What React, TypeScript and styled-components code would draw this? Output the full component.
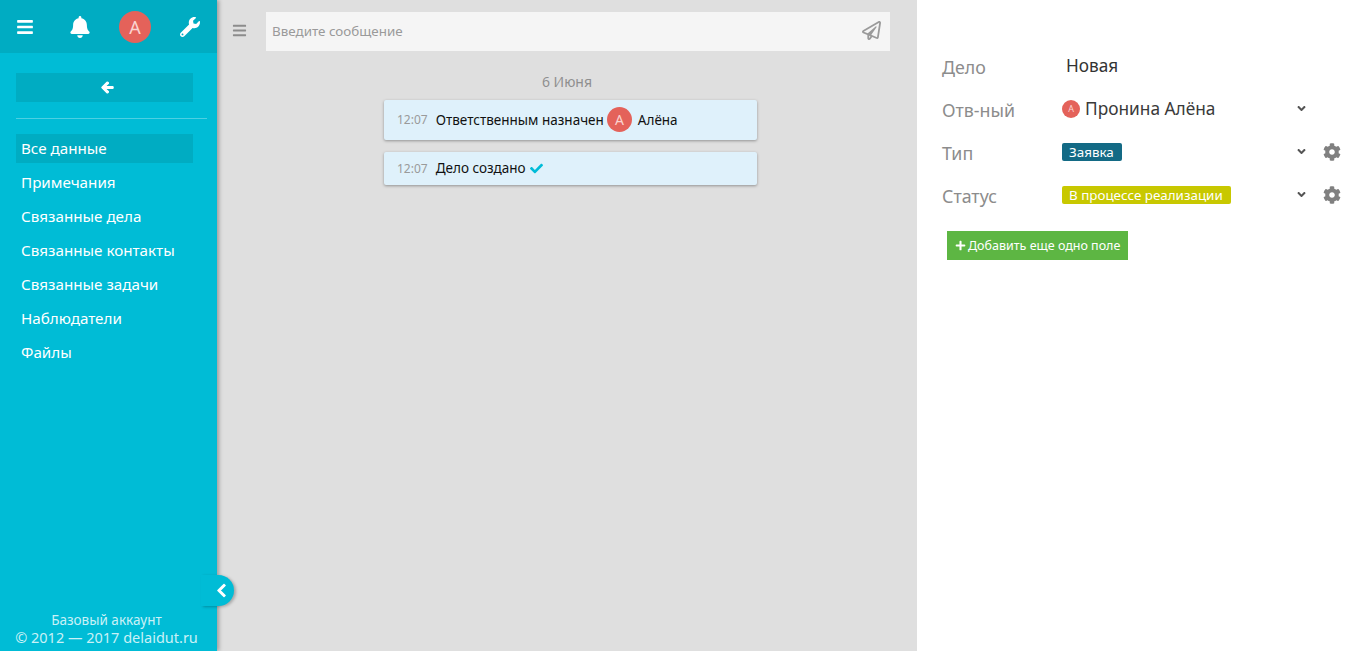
import { createGlobalStyle, styled } from "styled-components";
import {
  FaAngleDown,
  FaArrowLeft,
  FaBars,
  FaBell,
  FaCheck,
  FaChevronLeft,
  FaCog,
  FaPlus,
  FaRegPaperPlane,
  FaWrench,
} from "react-icons/fa";

const GlobalStyle = createGlobalStyle`
  html, body {
    margin: 0;
    height: 100%;
    overflow: hidden;
    font-family: "Noto Sans", "Open Sans", sans-serif;
  }
  #root { height: 100%; }
`;

const menuItems = [
  "Все данные",
  "Примечания",
  "Связанные дела",
  "Связанные контакты",
  "Связанные задачи",
  "Наблюдатели",
  "Файлы",
];

const App = () => {
  return (
    <Page>
      <GlobalStyle />
      <Sidebar>
        <TopBar>
          <TopSlot><FaBars size={18} /></TopSlot>
          <TopSlot><FaBell size={22} /></TopSlot>
          <TopSlot><Avatar $size={32} $font={18}>А</Avatar></TopSlot>
          <TopSlot><FaWrench size={20} /></TopSlot>
        </TopBar>
        <SideBody>
          <BackButton>
            <FaArrowLeft size={13} stroke="currentColor" strokeWidth={40} />
          </BackButton>
          <Divider />
          <Menu>
            {menuItems.map((item, i) => (
              <MenuItem key={item} $active={i === 0}>
                {item}
              </MenuItem>
            ))}
          </Menu>
        </SideBody>
        <Footer>
          <div>Базовый аккаунт</div>
          <FooterCopy>© 2012 — 2017 delaidut.ru</FooterCopy>
        </Footer>
        <Collapse>
          <FaChevronLeft size={15} stroke="currentColor" strokeWidth={30} />
        </Collapse>
      </Sidebar>

      <Feed>
        <Composer>
          <MenuToggle>
            <FaBars size={15} />
          </MenuToggle>
          <MessageBox>
            <Placeholder>Введите сообщение</Placeholder>
            <FaRegPaperPlane size={19} color="#9a9a9a" />
          </MessageBox>
        </Composer>
        <DateLabel>6 Июня</DateLabel>
        <Events>
          <EventCard $height={40}>
            <Time>12:07</Time>
            <span>Ответственным назначен</span>
            <EventAvatar $size={25} $font={14}>А</EventAvatar>
            <PersonName>Алёна</PersonName>
          </EventCard>
          <EventCard $height={33}>
            <Time>12:07</Time>
            <span>Дело создано</span>
            <FaCheck size={13} color="#00bcd8" />
          </EventCard>
        </Events>
      </Feed>

      <Details>
        <Field>
          <Label>Дело</Label>
          <Title>Новая</Title>
        </Field>
        <Field>
          <Label>Отв-ный</Label>
          <Value>
            <Avatar $size={18} $font={9}>А</Avatar>
            <Person>Пронина Алёна</Person>
          </Value>
          <Caret><FaAngleDown size={13} /></Caret>
          <GearSlot />
        </Field>
        <Field>
          <Label>Тип</Label>
          <Value>
            <Tag $bg="#136a85">Заявка</Tag>
          </Value>
          <Caret><FaAngleDown size={13} /></Caret>
          <GearSlot><FaCog size={18} /></GearSlot>
        </Field>
        <Field>
          <Label>Статус</Label>
          <Value>
            <Tag $bg="#c8c800">В процессе реализации</Tag>
          </Value>
          <Caret><FaAngleDown size={13} /></Caret>
          <GearSlot><FaCog size={18} /></GearSlot>
        </Field>
        <AddButton>
          <FaPlus size={11} />
          Добавить еще одно поле
        </AddButton>
      </Details>
    </Page>
  );
};

export default App;

const Page = styled.div`
  display: flex;
  height: 651px;
  width: 1363px;
  overflow: hidden;
`;

const Sidebar = styled.aside`
  position: relative;
  z-index: 2;
  flex: 0 0 217px;
  display: flex;
  flex-direction: column;
  background: #00bcd6;
  box-shadow: 2px 0 4px rgba(0, 0, 0, 0.3);
  color: #fff;
`;

const TopBar = styled.div`
  height: 53px;
  flex: none;
  display: grid;
  grid-template-columns: repeat(4, 50px);
  gap: 5px;
  align-items: center;
  background: #00acc2;
`;

const TopSlot = styled.div`
  display: flex;
  justify-content: center;
`;

const Avatar = styled.span<{ $size: number; $font: number }>`
  flex: none;
  display: inline-flex;
  align-items: center;
  justify-content: center;
  width: ${(p) => p.$size}px;
  height: ${(p) => p.$size}px;
  border-radius: 50%;
  background: #e4625a;
  color: #fbd3cf;
  font-size: ${(p) => p.$font}px;
  line-height: 1;
`;

const EventAvatar = styled(Avatar)`
  margin-left: -1px;
`;

const SideBody = styled.div`
  flex: 1;
  padding: 20px 10px 0 16px;
`;

const BackButton = styled.div`
  width: 177px;
  height: 29px;
  box-sizing: border-box;
  padding-left: 5px;
  display: flex;
  align-items: center;
  justify-content: center;
  background: #00acc2;
`;

const Divider = styled.div`
  height: 1px;
  margin: 16px 0 15px;
  width: 191px;
  background: rgba(255, 255, 255, 0.3);
`;

const Menu = styled.nav`
  display: flex;
  flex-direction: column;
  gap: 5px;
`;

const MenuItem = styled.div<{ $active?: boolean }>`
  width: 172px;
  padding: 0 0 2px 5px;
  height: 27px;
  display: flex;
  align-items: center;
  font-size: 15.2px;
  background: ${(p) => (p.$active ? "#00acc2" : "transparent")};
`;

const Footer = styled.div`
  padding-bottom: 5px;
  text-align: center;
  font-size: 13.5px;
  line-height: 17px;
  color: #c9f1f7;
  width: 213px;
`;

const FooterCopy = styled.div`
  font-size: 14.5px;
`;

const Collapse = styled.div`
  position: absolute;
  left: 201px;
  top: 575px;
  width: 33px;
  height: 31px;
  box-sizing: border-box;
  padding-left: 7px;
  border-radius: 0 16px 16px 0;
  background: #00bcd6;
  box-shadow: 2px 1px 3px rgba(0, 0, 0, 0.25);
  display: flex;
  align-items: center;
  justify-content: center;
`;

const Feed = styled.main`
  flex: 0 0 700px;
  background: #dfdfdf;
  display: flex;
  flex-direction: column;
`;

const Composer = styled.div`
  display: flex;
  align-items: center;
  margin-top: 12px;
  padding-left: 15px;
`;

const MenuToggle = styled.div`
  width: 34px;
  padding-bottom: 2px;
  display: flex;
  color: #8c8c8c;
`;

const MessageBox = styled.div`
  width: 624px;
  height: 39px;
  box-sizing: border-box;
  padding: 0 9px 2px 6px;
  display: flex;
  align-items: center;
  justify-content: space-between;
  background: #f5f5f5;
`;

const Placeholder = styled.span`
  font-size: 13.4px;
  color: #9a9a9a;
`;

const DateLabel = styled.div`
  margin-top: 22px;
  text-align: center;
  width: 700px;
  font-size: 14px;
  line-height: 18px;
  color: #8f8f8f;
`;

const Events = styled.div`
  margin: 9px 0 0 167px;
  display: flex;
  flex-direction: column;
  gap: 12px;
  width: 373px;
`;

const EventCard = styled.div<{ $height: number }>`
  height: ${(p) => p.$height}px;
  box-sizing: border-box;
  padding: 0 0 1px 13px;
  display: flex;
  align-items: center;
  gap: 4px;
  border-radius: 2px;
  background: #dff1fb;
  box-shadow: 0 1px 3px rgba(0, 0, 0, 0.35);
  font-size: 13.5px;
  color: #111;
`;

const PersonName = styled.span`
  margin-left: 2px;
`;

const Time = styled.span`
  font-size: 12px;
  color: #9a9a9a;
  margin-right: 4px;
`;

const Details = styled.section`
  flex: 1;
  background: #fff;
  padding: 44px 0 0 25px;
  display: flex;
  flex-direction: column;
`;

const Field = styled.div`
  height: 43px;
  display: flex;
  align-items: center;
`;

const Label = styled.div`
  width: 120px;
  font-size: 17.8px;
  color: #8c8c8c;
  position: relative;
  top: 1px;
`;

const Title = styled.div`
  margin-left: 4px;
  font-size: 17.2px;
  color: #333;
`;

const Value = styled.div`
  width: 233px;
  display: flex;
  align-items: center;
  gap: 5px;
`;

const Person = styled.span`
  font-size: 17.3px;
  color: #3a3a3a;
`;

const Tag = styled.span`
  background: ${(p: { $bg: string }) => p.$bg};
  color: #fff;
  height: 18px;
  padding: 0 8px 0 7px;
  border-radius: 2px;
  display: inline-flex;
  align-items: center;
  font-size: 13.4px;
`;

const Caret = styled.div`
  width: 28px;
  display: flex;
  color: #555;
`;

const GearSlot = styled.div`
  width: 20px;
  display: flex;
  color: #808080;
`;

const AddButton = styled.div`
  margin: 15px 0 0 5px;
  width: 181px;
  height: 29px;
  box-sizing: border-box;
  padding-left: 8px;
  display: flex;
  align-items: center;
  gap: 2px;
  background: #5db643;
  color: #fff;
  font-size: 12.5px;
`;
